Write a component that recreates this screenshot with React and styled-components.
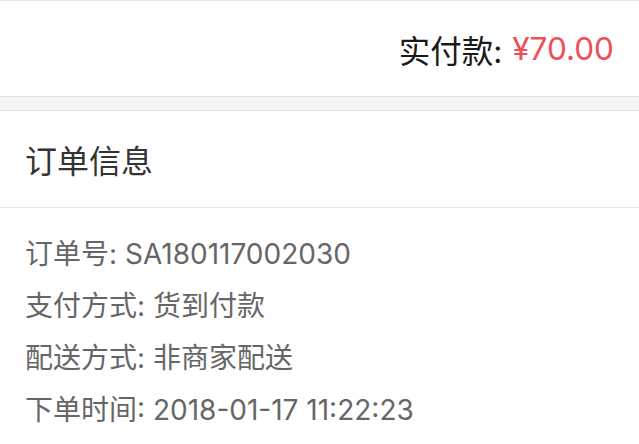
import React from 'react';
import styled, { createGlobalStyle } from 'styled-components';

const GlobalStyle = createGlobalStyle`
  html, body {
    margin: 0;
    padding: 0;
    background: #fff;
    font-family: Inter, "Noto Sans CJK SC", sans-serif;
  }
`;

const Page = styled.div`
  width: 639px;
  height: 444px;
  overflow: hidden;
  background: #fff;
`;

const TotalBar = styled.div`
  height: 95px;
  border-top: 1px solid #e6e6e6;
  display: flex;
  align-items: center;
  justify-content: flex-end;
  padding-right: 25px;
  font-size: 31.5px;
  color: #1a1a1a;
`;

const Price = styled.span`
  color: #ee5058;
  margin-left: 10px;
`;

const Divider = styled.div`
  height: 13px;
  background: #f5f5f5;
  border-top: 1px solid #e2e2e2;
  border-bottom: 1px solid #e2e2e2;
`;

const SectionTitle = styled.div`
  height: 96px;
  display: flex;
  align-items: center;
  padding-left: 25px;
  font-size: 32px;
  color: #333;
  border-bottom: 1px solid #e6e6e6;
`;

const InfoList = styled.div`
  padding: 20px 25px 0;
  display: flex;
  flex-direction: column;
`;

const InfoRow = styled.div`
  height: 52px;
  line-height: 52px;
  font-size: 28px;
  color: #666;
  white-space: nowrap;
`;

const info = [
  ['订单号', 'SA180117002030'],
  ['支付方式', '货到付款'],
  ['配送方式', '非商家配送'],
  ['下单时间', '2018-01-17 11:22:23'],
];

const App = () => (
  <Page>
    <GlobalStyle />
    <TotalBar>
      实付款:<Price>¥70.00</Price>
    </TotalBar>
    <Divider />
    <SectionTitle>订单信息</SectionTitle>
    <InfoList>
      {info.map(([label, value]) => (
        <InfoRow key={label}>
          {label}: {value}
        </InfoRow>
      ))}
    </InfoList>
  </Page>
);

export default App;
